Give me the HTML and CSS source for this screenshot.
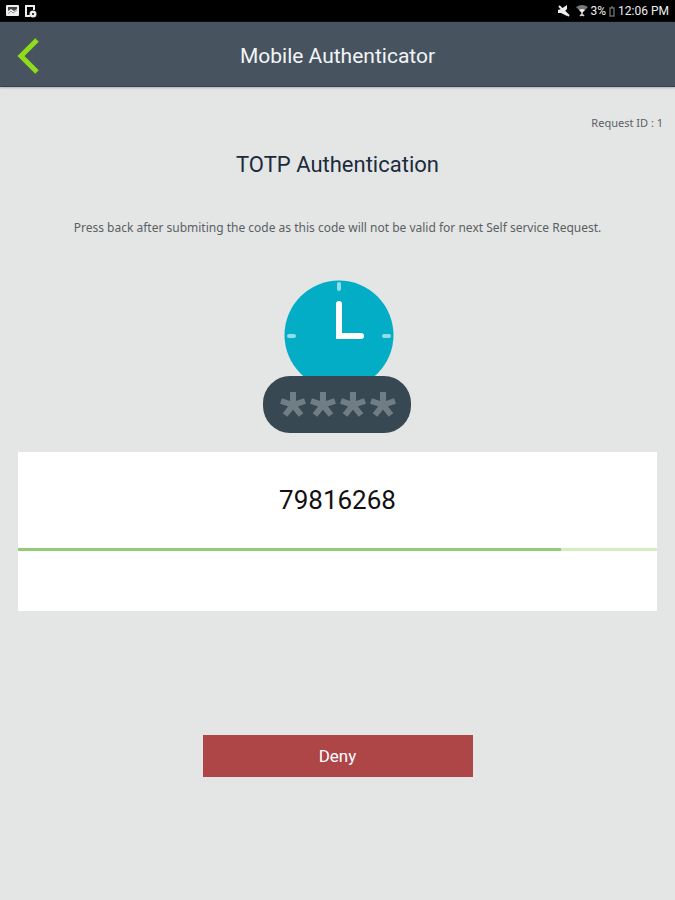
FILE: index.html
```html
<!DOCTYPE html>
<html lang="en">
  <head>
    <meta charset="utf-8">
    <meta name="viewport" content="width=device-width, initial-scale=1">
    <title>Mobile Authenticator</title>
    <link rel="stylesheet" href="styles.css">
  </head>
  <body>
    <!-- Device status bar -->
    <div class="statusbar">
      <div class="status-group">
        <svg width="13" height="12" viewBox="0 0 13 12">
          <rect x="0" y="0" width="13" height="11" rx="1" fill="#eee"/>
          <path d="M2 6 V2 H11 V4 L8 6 L5 4 Z" fill="#444"/>
          <path d="M2 9 L5 6 L7 8 L11 5" fill="none" stroke="#999"/>
        </svg>
        <svg width="12" height="13" viewBox="0 0 12 13">
          <path d="M9 5 V1 H1 V11 H5" fill="none" stroke="#eee" stroke-width="2"/>
          <circle cx="8" cy="9" r="3.500" fill="#eee"/>
          <path d="M8 8 V10 M7 9 H9" stroke="#000"/>
        </svg>
      </div>
      <div class="status-group status-right">
        <svg class="mute" width="12" height="12" viewBox="0 0 12 12">
          <path d="M0 5 L3 4 L9 0 V4 L7 6 L9 9 V11 L3 8 H0 Z" fill="#eee"/>
          <path d="M1 1 L11 11" stroke="#eee" stroke-width="2"/>
        </svg>
        <svg class="wifi" width="12" height="12" viewBox="0 0 12 12">
          <path d="M0 2 Q6 -2 12 2 L6 8 Z" fill="#777"/>
          <path d="M3 5 Q6 3 9 5 L6 8 Z" fill="#eee"/>
          <path d="M6 7 V11 M4 11 L6 9 L8 11" fill="none" stroke="#ccc" stroke-width="1.500"/>
        </svg>
        <span>3%</span>
        <svg class="battery" width="6" height="11" viewBox="0 0 6 11">
          <path d="M2 1 H4 M1 2 H5 V10 H1 Z" fill="none" stroke="#666" stroke-width="1.500"/>
        </svg>
        <span>12:06 PM</span>
      </div>
    </div>

    <header class="header">
      <button class="back" type="button" aria-label="Back">
        <svg width="24" height="38" viewBox="0 0 24 38">
          <path d="M21 3 L5 19 L21 35" fill="none" stroke="#8fdb1c" stroke-width="5"/>
        </svg>
      </button>
      <h1>Mobile Authenticator</h1>
    </header>

    <main class="content">
      <p class="request">Request ID : 1</p>
      <h2>TOTP Authentication</h2>
      <p class="note">Press back after submiting the code as this code will not be valid for next Self service Request.</p>

      <!-- Clock sitting on the passcode pill -->
      <svg class="clock" width="150" height="154" viewBox="0 0 150 154">
        <circle cx="76" cy="56" r="54.500" fill="#04adc6"/>
        <path d="M76 5 V10 M26 57 H31 M121 57 H126" stroke="#8fdfe9" stroke-width="4" stroke-linecap="round"/>
        <path d="M76 25 V57 H98" fill="none" stroke="#fff" stroke-width="6" stroke-linecap="round"/>
        <rect x="0" y="97" width="148" height="57" rx="27" fill="#374852"/>
        <defs>
          <path id="star" d="M0 0 V-13 M0 0 L12 -4 M0 0 L8 10 M0 0 L-8 10 M0 0 L-12 -4" stroke="#707d84" stroke-width="6"/>
        </defs>
        <use href="#star" x="30" y="126"/>
        <use href="#star" x="60" y="126"/>
        <use href="#star" x="90" y="126"/>
        <use href="#star" x="120" y="126"/>
      </svg>

      <section class="card">
        <div class="code">79816268</div>
        <progress class="timer" value="85" max="100" aria-label="Time left"></progress>
      </section>

      <button class="deny" type="button">Deny</button>
    </main>
  </body>
</html>
```

FILE: styles.css
```css
* {
  box-sizing: border-box;
}
body {
  margin: 0;
  min-height: 100vh;
  background-color: #e3e6e5;
  color: #1d2b3c;
  font-family: Roboto, "Noto Sans", sans-serif;
}
h1, h2, p {
  margin: 0;
  font-weight: normal;
}
button {
  border: 0;
  padding: 0;
  font-family: inherit;
  cursor: pointer;
}
svg {
  display: block;
}

.statusbar {
  display: flex;
  justify-content: space-between;
  align-items: center;
  height: 22px;
  padding: 0 6px;
  background-color: #000;
  color: #eee;
  font-size: 12px;
}
.status-group {
  display: flex;
  align-items: center;
  gap: 6px;
}
.status-right {
  gap: 3px;
}
.mute {
  margin-right: 3px;
}

.header {
  display: grid;
  grid-template-columns: 48px 1fr 48px;
  align-items: center;
  height: 65px;
  padding: 0 16px;
  background-color: #47545f;
  border-bottom: 1px solid #35424f;
  box-shadow: 0 1px 2px #aab2b8;
}
.header h1 {
  padding-top: 4px;
  color: #f2f5f7;
  font-size: 21px;
  line-height: 28px;
  text-align: center;
}
.back {
  width: 24px;
  padding-top: 3px;
  background: none;
}

.content {
  display: flex;
  flex-direction: column;
  align-items: center;
  padding: 28px 18px;
}
.request {
  align-self: flex-end;
  margin-right: -6px;
  color: #5b6064;
  font-family: "Noto Sans", sans-serif;
  font-size: 11px;
  line-height: 16px;
}
.content h2 {
  margin-top: 19px;
  font-size: 22px;
  line-height: 30px;
}
.note {
  margin-top: 40px;
  color: #5b6064;
  font-family: "Noto Sans", sans-serif;
  font-size: 12px;
  line-height: 16px;
  text-align: center;
}
.clock {
  margin-top: 43px;
}

.card {
  align-self: stretch;
  margin-top: 19px;
  padding-bottom: 60px;
  background-color: #fff;
}
.code {
  padding: 32px 0;
  color: #111;
  font-size: 26px;
  line-height: 32px;
  text-align: center;
}
.timer {
  display: block;
  width: 100%;
  height: 3px;
  border: 0;
  background-color: #d3efbf;
  appearance: none;
  -webkit-appearance: none;
}
.timer::-webkit-progress-bar {
  background-color: #d3efbf;
}
.timer::-webkit-progress-value {
  background-color: #93cb77;
}
.timer::-moz-progress-bar {
  background-color: #93cb77;
}

.deny {
  width: 40vw;
  height: 42px;
  margin-top: 124px;
  background-color: #ae4547;
  color: #fff;
  font-size: 17px;
}
```
